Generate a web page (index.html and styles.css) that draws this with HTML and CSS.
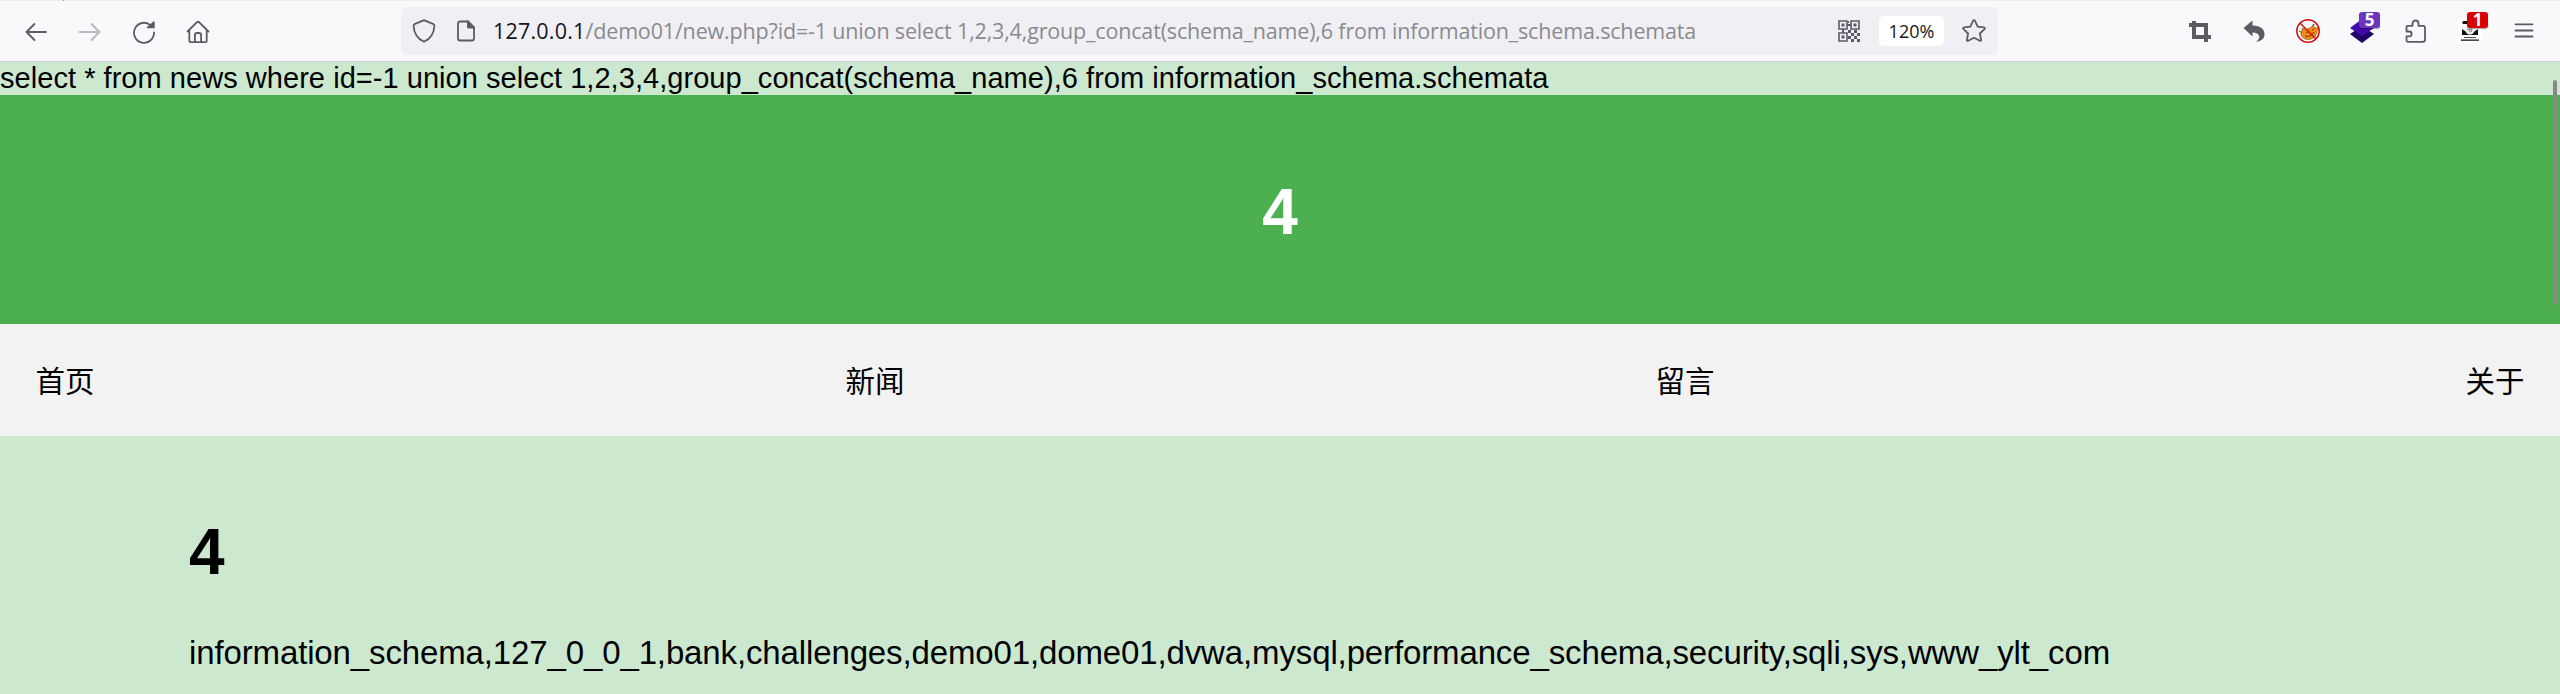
FILE: index.html
```html
<!DOCTYPE html>
<html lang="zh">
<head>
<meta charset="utf-8">
<title>4</title>
<link rel="stylesheet" href="styles.css">
</head>
<body>
<div class="toolbar">
  <div class="tabline"><span class="tick"></span></div>
  <div class="nav-icons">
    <svg class="i" width="24" height="24" viewBox="0 0 24 24"><path d="M22 12H2.500M10.500 4L2.500 12l8 8"/></svg>
    <svg class="i dim" width="24" height="24" viewBox="0 0 24 24"><path d="M1.500 12H21.500M13.500 4l8 8-8 8"/></svg>
    <svg class="i" width="24" height="24" viewBox="0 0 24 24"><path d="M18.500 5.200A10 10 0 1 0 22 12.500"/><path class="f" d="M22.700 2v6.300h-7.700q-.8-.4-.2-1.100l6.500-5.800q1-.5 1.400.6z"/></svg>
    <svg class="i" width="24" height="24" viewBox="0 0 24 24"><path d="M1.500 11.500L11 2.200q1-.8 2 0l9.500 9.300M3.300 10v11q0 1.200 1.200 1.200h15q1.200 0 1.200-1.200V10M8.900 22v-7q0-2 2-2h2.200q2 0 2 2v7"/></svg>
  </div>
  <div class="urlbar">
    <svg class="i" width="24" height="24" viewBox="0 0 24 24"><path d="M12 1.200l9.500 4q1 .5.900 1.500c-.3 7.500-3.900 13-10.400 16.100C5.500 19.700 1.900 14.200 1.600 6.700q-.1-1 .9-1.500z"/></svg>
    <svg class="i page" width="24" height="24" viewBox="0 0 24 24"><path d="M14 2.500H6Q4 2.500 4 4.500v15q0 2 2 2h12q2 0 2-2V9"/><path class="f" d="M13 1.500h1.500l6.500 6.500v1.500h-6.500q-1.500 0-1.500-1.500z"/></svg>
    <span class="url"><b>127.0.0.1</b>/demo01/new.php?id=-1 union select 1,2,3,4,group_concat(schema_name),6 from information_schema.schemata</span>
    <svg class="qr" width="22" height="22" viewBox="0 0 22 22"><g fill="none" stroke="#5b5b66" stroke-width="1.600"><path d="M1 1h8v8H1zM13 1h8v8h-8zM1 13h8v8H1z"/></g><path fill="#5b5b66" d="M3.500 3.500h3v3h-3zM15.500 3.500h3v3h-3zM3.500 15.500h3v3h-3zM9 4h4v2H9zM4 9h2v4H4zM10 10h3v3h-3zM16 10h3v3h-3zM13 13h3v3h-3zM19 13h3v3h-3zM10 16h3v3h-3zM16 16h3v3h-3zM13 19h3v3h-3zM19 19h3v3h-3zM10 1h1v2h-1z"/></svg>
    <span class="zoom">120%</span>
    <svg class="i" width="24" height="24" viewBox="0 0 24 24"><path d="M12 1.200q.7 0 1 .7l2.700 5.700 6.200.8q1.600.4.600 1.700l-4.600 4.400 1.200 6.300q.1 1.500-1.300 1L12 18.800l-5.800 3q-1.400.5-1.300-1l1.200-6.300-4.600-4.400q-1-1.300.6-1.700l6.200-.8L11 1.900q.3-.7 1-.7z"/></svg>
  </div>
  <div class="ext">
    <svg width="24" height="24" viewBox="0 0 24 24"><path fill="none" stroke="#5b5b66" stroke-width="4" d="M1 6h17v12M6 2v16h17M6 2v4M18 18v5"/></svg>
    <svg width="24" height="24" viewBox="0 0 24 24"><path fill="#5b5b66" d="M1.500 9L10.500 1.500v5c8 0 12 3.500 12 9 0 3.500-2 6-8.500 7.500 5.500-4 4-9.500-3.500-9.500v4z"/></svg>
    <svg width="24" height="24" viewBox="0 0 24 24"><path fill="none" stroke="#444" d="M3 12l5 3M18 5l-2 5"/><path fill="#ef8b0e" stroke="#7b4a10" stroke-width=".6" d="M5.500 13L6.500 9l4 1.500 5-2.500 2-3 .8 4 3.200-.5c0 7-3 12-9.500 12-5 0-8-4-6.500-7.500z"/><path fill="none" stroke="#7b3a10" d="M9 17q5 2 9-4M10 13l2 1M16 11l2-1"/><g fill="none" stroke="#cf1111" stroke-width="1.500"><circle cx="12" cy="12" r="11.200"/><path d="M4 4l16 16"/></g></svg>
    <span class="badged"><svg width="24" height="24" viewBox="0 0 24 24"><path fill="#1c0468" d="M0 15l12-8 12 8-12 9z"/><path fill="#4408a8" d="M0 9l12-9 12 9-12 8z"/></svg><em class="violet">5</em></span>
    <svg class="i" width="24" height="24" viewBox="0 0 24 24"><path d="M2.500 12.500V8.300q0-1.500 1.500-1.500h4.500V4.500a3 3 0 0 1 6 0v2.300H19q2 0 2 2v12q0 2-2 2H4q-1.500 0-1.500-1.500v-4h2.700a2.400 2.400 0 0 0 0-4.800z"/></svg>
    <span class="badged"><svg width="24" height="24" viewBox="0 0 24 24"><path fill="#fff" d="M0 0h24v24H0z"/><path fill="#111" d="M4 3l2-1h3v3H5zM4 10l3 2q5 5 10 0l3-2v6H4zM6 18h12v.8H6zM3 20.500h18v1.200H3z"/><circle cx="12" cy="11" r="4.500" fill="#eee"/><path fill="none" stroke="#888" d="M9 10l2 1 3-1-1 3-2-1"/></svg><em class="red">1</em></span>
    <svg class="i" width="24" height="24" viewBox="0 0 24 24"><path d="M3.500 5.300h17M3.500 11.500h17M3.500 17.500h17"/></svg>
  </div>
</div>
<div class="query">select * from news where id=-1 union select 1,2,3,4,group_concat(schema_name),6 from information_schema.schemata</div>
<header class="banner"><h1>4</h1></header>
<nav class="menu"><a>首页</a><a>新闻</a><a>留言</a><a>关于</a></nav>
<main class="content">
  <h1>4</h1>
  <p>information_schema,127_0_0_1,bank,challenges,demo01,dome01,dvwa,mysql,performance_schema,security,sqli,sys,www_ylt_com</p>
</main>
<div class="scrollbar"></div>
</body>
</html>
```
FILE: styles.css
```css
* { box-sizing: border-box; }
body {
  margin: 0;
  height: 694px;
  overflow: hidden;
  background: #cce8cf;
  color: #000;
  font-family: "Liberation Sans", "Noto Sans CJK SC", sans-serif;
}
.toolbar {
  position: relative;
  display: flex;
  align-items: center;
  height: 62px;
  padding: 1px 24px 0;
  background: #f9f9fb;
  border-bottom: 1px solid #ccccd1;
}
.tabline { position: absolute; inset: 0 0 auto; height: 1px; background: #ededf0; }
.tick { position: absolute; left: 63px; width: 1px; height: 1px; background: #999; }
.toolbar svg { display: block; flex: none; }
.i { fill: none; stroke: #5b5b66; stroke-width: 1.8; stroke-linecap: round; stroke-linejoin: round; }
.i .f { fill: #5b5b66; stroke: none; }
.dim { opacity: .4; }
.nav-icons { display: flex; gap: 30px; width: 377px; padding-top: 1px; }
.urlbar {
  display: flex;
  align-items: center;
  width: 1597px;
  height: 48px;
  padding: 0 12px 0 11px;
  border-radius: 6px;
  background: #f0f0f4;
}
.page { margin-left: 18px; }
.url {
  flex: 1;
  margin-left: 15px;
  color: #8a8a8f;
  font: 21.5px/48px "Open Sans", "Noto Sans", sans-serif;
  letter-spacing: -0.165px;
  white-space: nowrap;
}
.url b { font-weight: 400; color: #15141a; letter-spacing: 0.2px; }
.zoom {
  width: 65px;
  height: 30px;
  margin: 0 18px 0 19px;
  border-radius: 5px;
  background: #fff;
  color: #15141a;
  text-align: center;
  font: 18px/30px "Open Sans", sans-serif;
}
.ext { display: flex; gap: 30px; margin-left: auto; }
.badged { position: relative; width: 24px; height: 24px; }
.badged em {
  position: absolute;
  left: 9px;
  top: -7px;
  width: 21px;
  height: 16px;
  border-radius: 3px;
  color: #fff;
  text-align: center;
  font: 700 17px/16px "Open Sans", sans-serif;
  box-shadow: 0 1px 1px #0005;
}
.violet { background: #6b37bf; }
.red { background: #d90000; }
.query { height: 33px; font-size: 29px; line-height: 33px; letter-spacing: 0.045px; white-space: nowrap; }
.banner { display: grid; place-items: center; height: 229px; padding-top: 5px; background: #4caf50; color: #fff; }
h1 { margin: 0; font-size: 64px; line-height: 74px; }
.menu {
  display: flex;
  justify-content: space-between;
  height: 112px;
  padding: 0 35.5px;
  background: #f2f2f2;
  font-size: 29.5px;
  line-height: 115px;
}
.content { padding: 79px 189px 0; }
.content p { margin: 45px 0 0; font-size: 33px; line-height: 38px; letter-spacing: -0.13px; white-space: nowrap; }
.scrollbar { position: absolute; right: 3px; top: 80px; width: 4px; height: 225px; border-radius: 2px; background: #888; }
```
